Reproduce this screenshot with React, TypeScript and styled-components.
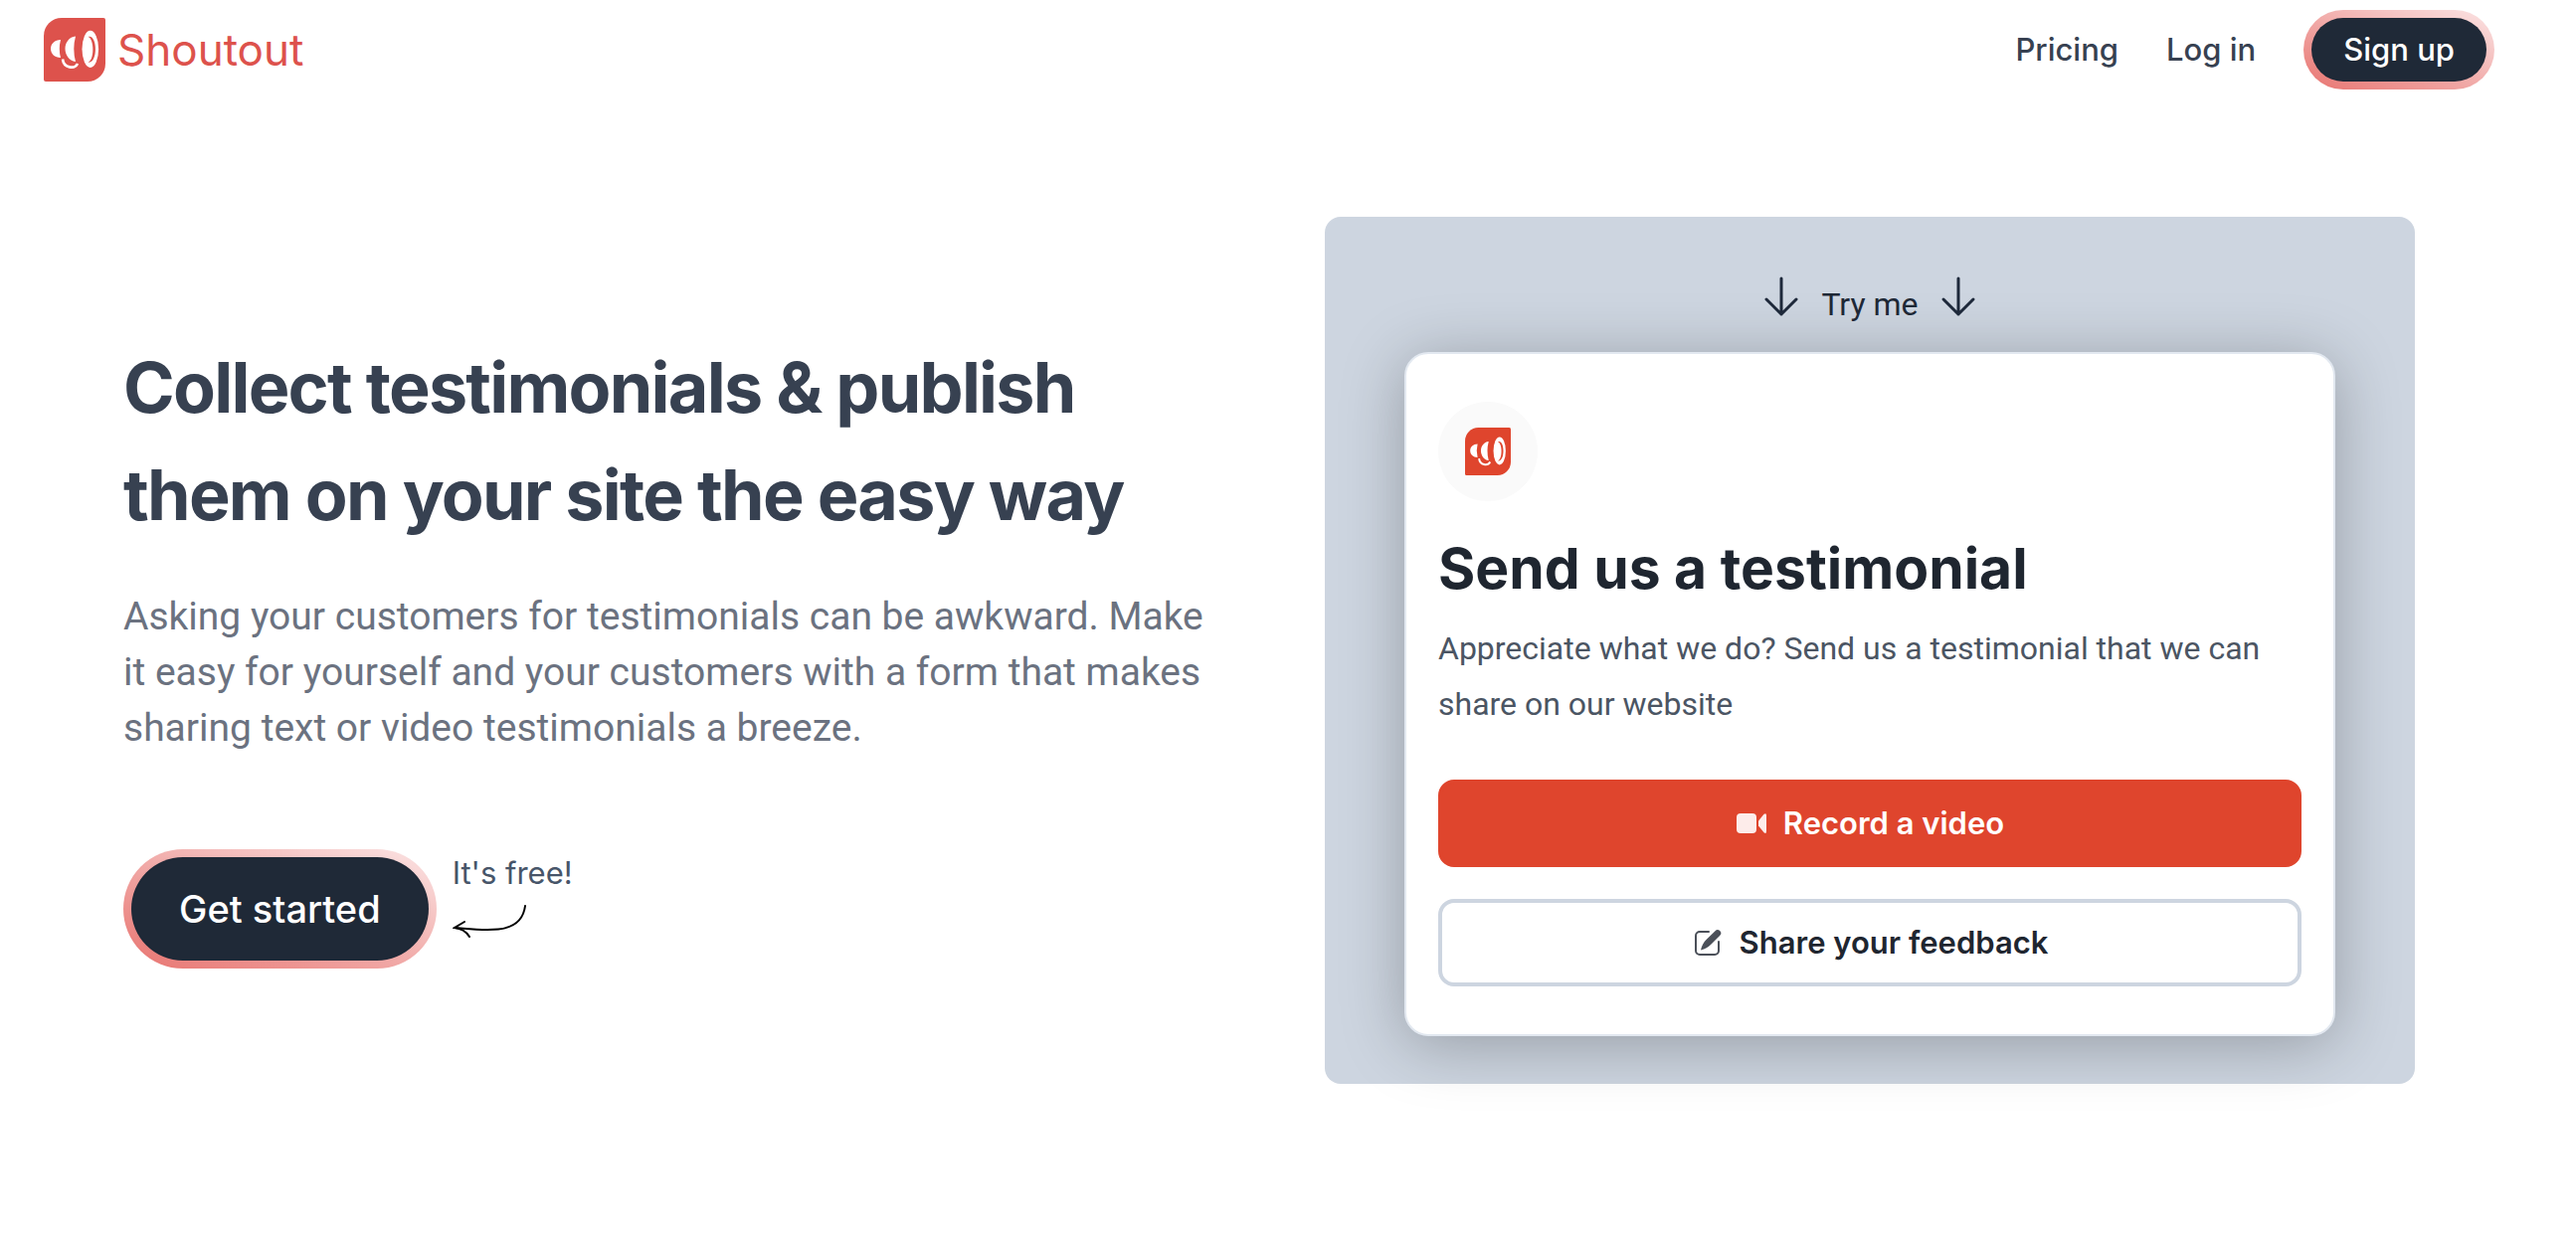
import React from "react";
import styled, { createGlobalStyle } from "styled-components";

const copyFont = `Roboto, "Liberation Sans", sans-serif`;

const GlobalStyle = createGlobalStyle`
  * { box-sizing: border-box; }
  body {
    margin: 0;
    background: #ffffff;
    color: #1f2937;
    font-family: Inter, "Liberation Sans", sans-serif;
    font-size: 31px;
    line-height: 48px;
    -webkit-font-smoothing: antialiased;
  }
  h1, h2, p { margin: 0; }
  a { color: inherit; text-decoration: none; }
  button { font-family: inherit; cursor: pointer; }
`;

const Header = styled.header`
  display: flex;
  align-items: center;
  justify-content: space-between;
  height: 100px;
  padding: 0 82px 0 44px;
`;

const Brand = styled.a`
  display: flex;
  align-items: center;
  gap: 12px;
`;

const BrandName = styled.span`
  color: #dd524c;
  font-size: 44px;
  font-weight: 400;
`;

const Nav = styled.nav`
  display: flex;
  align-items: center;
  gap: 48px;
`;

const NavLink = styled.a`
  color: #374151;
  font-weight: 500;
`;

const PillButton = styled.button<{ $large?: boolean }>`
  border: 8px solid transparent;
  border-radius: 60px;
  background:
    linear-gradient(#1f2937, #1f2937) padding-box,
    linear-gradient(to top right, #e87470, #fbe5e5) border-box;
  color: #ffffff;
  font-weight: 500;
  font-size: ${(p) => (p.$large ? 38 : 31)}px;
  line-height: ${(p) => (p.$large ? 56 : 48)}px;
  padding: ${(p) => (p.$large ? "24px 48px" : "8px 32px")};
`;

const Hero = styled.main`
  display: grid;
  grid-template-columns: 1fr 1fr;
  align-items: center;
  gap: 112px;
  padding: 118px 162px 154px 124px;
`;

const Pitch = styled.section`
  display: flex;
  flex-direction: column;
  align-items: flex-start;
  padding-top: 2px;
`;

const Headline = styled.h1`
  color: #374151;
  font-size: 70px;
  font-weight: 700;
  line-height: 108px;
  letter-spacing: -0.025em;
`;

const Lead = styled.p`
  margin-top: 40px;
  color: #6b7280;
  font-family: ${copyFont};
  font-size: 39px;
  line-height: 56px;
`;

const Actions = styled.div`
  display: flex;
  align-items: flex-start;
  gap: 16px;
  margin-top: 94px;
`;

const FreeNote = styled.div`
  display: flex;
  flex-direction: column;
  gap: 8px;
  color: #475569;
`;

const Panel = styled.section`
  display: flex;
  flex-direction: column;
  gap: 24px;
  padding: 56px 80px 48px;
  border-radius: 16px;
  background: #cdd5e0;
`;

const TryRow = styled.div`
  display: flex;
  justify-content: center;
  gap: 16px;
  height: 56px;
`;

const TryText = styled.span`
  align-self: flex-end;
  font-family: ${copyFont};
  font-size: 32px;
`;

const Card = styled.article`
  padding: 48px 32px;
  border: 2px solid #e2e8f0;
  border-radius: 24px;
  background: #ffffff;
  box-shadow: 0 8px 64px rgba(0, 0, 0, 0.27);
`;

const Avatar = styled.div`
  display: flex;
  align-items: center;
  justify-content: center;
  width: 100px;
  height: 100px;
  border-radius: 50%;
  background: #fafafa;
`;

const CardTitle = styled.h2`
  margin-top: 32px;
  color: #1f2630;
  font-size: 57px;
  font-weight: 700;
  line-height: 72px;
`;

const CardText = styled.p`
  margin-top: 16px;
  color: #4b5563;
  font-family: ${copyFont};
  font-size: 32px;
  line-height: 56px;
`;

const CardActions = styled.div`
  display: flex;
  flex-direction: column;
  gap: 32px;
  margin-top: 48px;
`;

const CardButton = styled.button<{ $primary?: boolean }>`
  display: flex;
  align-items: center;
  justify-content: center;
  gap: 16px;
  height: 88px;
  border: 4px solid ${(p) => (p.$primary ? "#df452d" : "#cdd5e0")};
  border-radius: 16px;
  background: ${(p) => (p.$primary ? "#df452d" : "#ffffff")};
  color: ${(p) => (p.$primary ? "#ffffff" : "#1f2630")};
  font-size: 31px;
  font-weight: 600;
  line-height: 48px;
`;

const Logo = ({ color, width, height }: { color: string; width: number; height: number }) => (
  <svg width={width} height={height} viewBox="0 0 62 64" preserveAspectRatio="none" aria-hidden="true">
    <path d="M18 0H60Q62 0 62 2V46A18 18 0 0 1 44 64H2Q0 64 0 62V18A18 18 0 0 1 18 0Z" fill={color} />
    <path d="M17 22C11 22 7 26 7 31S11 40 17 40Q14.600 31 17 22Z" fill="#fff" />
    <path d="M32 18.500C25.500 19 21.500 25 21.500 31S25.500 43.500 32 44Q28.600 31 32 18.500Z" fill="#fff" />
    <path d="M19 41.500C20 50.500 31 52 34 46" fill="none" stroke="#fff" strokeWidth="2.600" />
    <ellipse cx="46.800" cy="31.300" rx="8.300" ry="18.600" fill="#fff" />
    <path d="M44.500 19C54.500 16 54.500 47 44.500 44.500C51 43 51 21 44.500 19Z" fill={color} />
  </svg>
);

const DownArrow = () => (
  <svg width="48" height="48" viewBox="0 0 24 24" fill="none" stroke="#1e293b" strokeWidth="1.500" strokeLinecap="round" strokeLinejoin="round" aria-hidden="true">
    <path d="M19.500 13.500L12 21m0 0l-7.500-7.500M12 21V3" />
  </svg>
);

const CurvedArrow = () => (
  <svg width="76" height="36" viewBox="0 0 76 36" fill="none" stroke="#000" strokeWidth="2" strokeLinecap="round" aria-hidden="true">
    <path d="M73 1C71 17 60 23 46 24.500C30 26 16 24 2 23" />
    <path d="M12 17L2 23Q12 24 17 32" />
  </svg>
);

const VideoIcon = () => (
  <svg width="32" height="32" viewBox="0 0 32 32" fill="#fdecea" aria-hidden="true">
    <rect x="1" y="6" width="20" height="20" rx="4" />
    <path d="M23 13.500L28.500 6.800Q31 5 31 8V24Q31 27 28.500 25.200L23 18.500Z" />
  </svg>
);

const EditIcon = () => (
  <svg width="32" height="32" viewBox="0 0 32 32" fill="none" aria-hidden="true">
    <path d="M17 5H8A4 4 0 0 0 4 9V24A4 4 0 0 0 8 28H23A4 4 0 0 0 27 24V15" stroke="#4b5059" strokeWidth="2" strokeLinecap="round" />
    <path d="M9 23.500C10 19 12 15.500 14.500 13L23.500 4.200A3.300 3.300 0 0 1 28.300 8.800L19 18C16.500 20.500 13.500 22.500 9 23.500Z" fill="#4b5059" />
  </svg>
);

export default function App() {
  return (
    <>
      <GlobalStyle />
      <Header>
        <Brand href="#">
          <Logo color="#dd524c" width={62} height={64} />
          <BrandName>Shoutout</BrandName>
        </Brand>
        <Nav>
          <NavLink href="#pricing">Pricing</NavLink>
          <NavLink href="#login">Log in</NavLink>
          <PillButton type="button">Sign up</PillButton>
        </Nav>
      </Header>
      <Hero>
        <Pitch>
          <Headline>Collect testimonials &amp; publish them on your site the easy way</Headline>
          <Lead>
            Asking your customers for testimonials can be awkward. Make it easy for yourself and your
            customers with a form that makes sharing text or video testimonials a breeze.
          </Lead>
          <Actions>
            <PillButton type="button" $large>Get started</PillButton>
            <FreeNote>
              <span>It's free!</span>
              <CurvedArrow />
            </FreeNote>
          </Actions>
        </Pitch>
        <Panel>
          <TryRow>
            <DownArrow />
            <TryText>Try me</TryText>
            <DownArrow />
          </TryRow>
          <Card>
            <Avatar>
              <Logo color="#df452d" width={46} height={48} />
            </Avatar>
            <CardTitle>Send us a testimonial</CardTitle>
            <CardText>
              Appreciate what we do? Send us a testimonial that we can share on our website
            </CardText>
            <CardActions>
              <CardButton type="button" $primary>
                <VideoIcon />
                Record a video
              </CardButton>
              <CardButton type="button">
                <EditIcon />
                Share your feedback
              </CardButton>
            </CardActions>
          </Card>
        </Panel>
      </Hero>
    </>
  );
}
